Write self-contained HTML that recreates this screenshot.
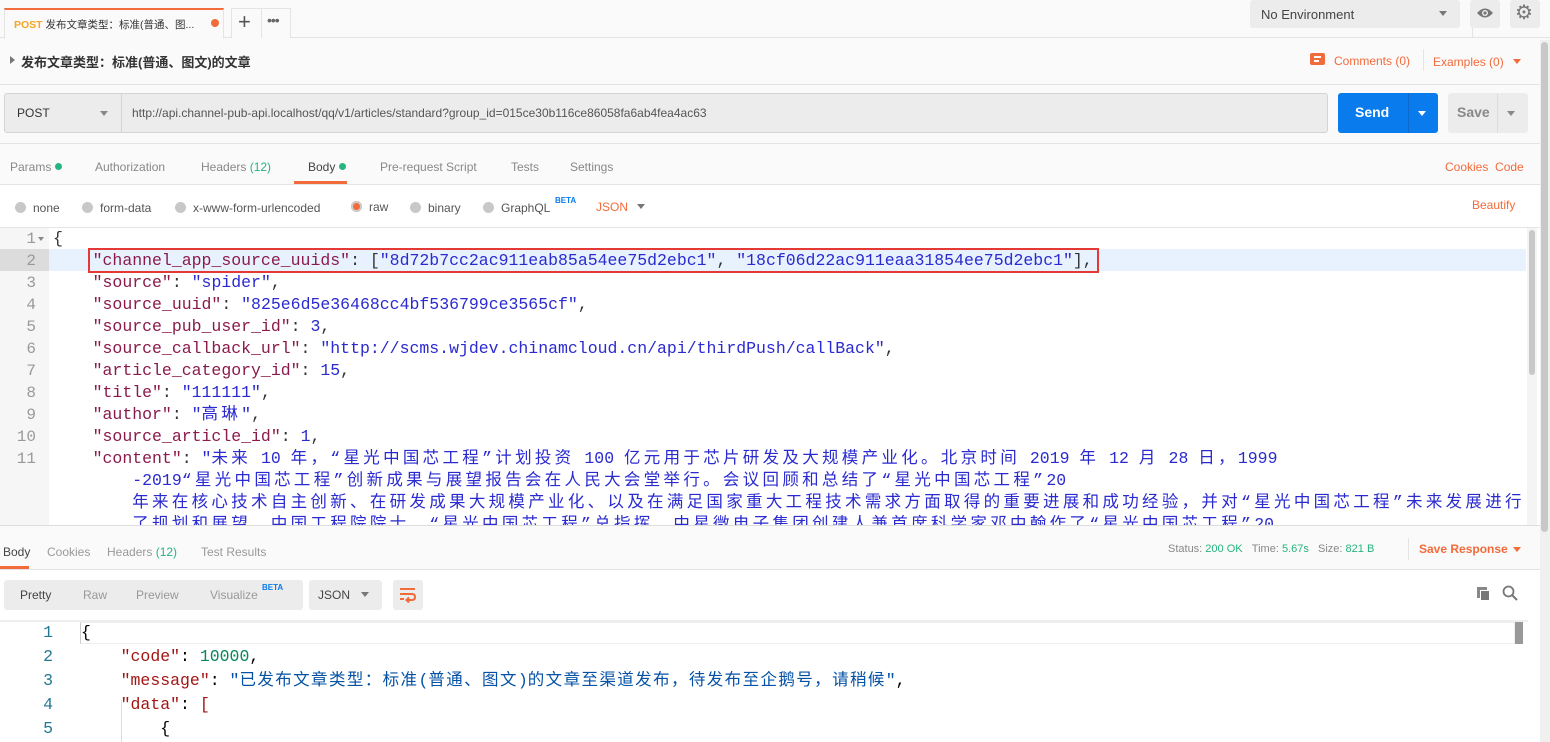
<!DOCTYPE html>
<html><head><meta charset="utf-8"><style>
*{box-sizing:border-box;margin:0;padding:0}
body{width:1550px;height:742px;overflow:hidden;background:#fafafa;font-family:"Liberation Sans","Noto Sans CJK SC",sans-serif;font-size:12px;color:#505050;position:relative}
.a{position:absolute}
.mono{font-family:"Liberation Mono","Noto Sans CJK SC",monospace;font-size:16.5px;white-space:pre}
.k{color:#8a1a4a}.s{color:#2a2ad0}.n{color:#117766}
.c{letter-spacing:3.3px}
.or{color:#f26b3a}.gr{color:#26b47f}
.dot{display:inline-block;width:7px;height:7px;border-radius:50%;background:#26b47f;margin-left:4px;vertical-align:1px}
.rad{display:inline-block;width:11px;height:11px;border-radius:50%;background:#c8c8c8;vertical-align:-1px;margin-right:7px}
.beta{position:absolute;color:#097bed;font-size:8px;font-weight:bold;top:-5px}
</style></head><body>
<!-- top bar -->
<div class="a" style="left:0;top:0;width:1550px;height:38px;background:#fafafa;border-bottom:1px solid #e4e4e4"></div>
<div class="a" style="left:4px;top:8px;width:220px;height:31px;background:#fafafa;border-top:2px solid #f26b3a;border-left:1px solid #e4e4e4;border-right:1px solid #e4e4e4"></div>
<div class="a" style="left:14px;top:17px;font-size:10.5px;white-space:nowrap"><span style="color:#f5a623;font-weight:bold">POST</span> <span style="color:#333">发布文章类型：标准(普通、图...</span></div>
<div class="a" style="left:211px;top:19px;width:8px;height:8px;border-radius:50%;background:#f26b3a"></div>
<div class="a" style="left:231px;top:8px;width:60px;height:30px;background:#fafafa;border:1px solid #e4e4e4;border-bottom:none"></div>
<div class="a" style="left:238px;top:9px;font-size:22px;color:#555">+</div>
<div class="a" style="left:261px;top:9px;height:29px;border-left:1px solid #e4e4e4"></div>
<div class="a" style="left:267px;top:12px;font-size:14px;color:#666;letter-spacing:-1px">•••</div>
<div class="a" style="left:1472px;top:0;height:38px;border-left:1px solid #e4e4e4"></div>
<div class="a" style="left:1250px;top:0;width:210px;height:28px;background:#ececec;border-radius:3px"></div>
<div class="a" style="left:1261px;top:7px;font-size:13px;color:#444">No Environment</div>
<div class="a" style="left:1439px;top:11px;border:4px solid transparent;border-top:5px solid #777"></div>
<div class="a" style="left:1470px;top:0;width:30px;height:28px;background:#ececec;border-radius:3px"></div>
<svg class="a" style="left:1476px;top:6px" width="18" height="14" viewBox="0 0 18 14"><path d="M1 7Q9 -2 17 7Q9 16 1 7Z" fill="#777"/><circle cx="9" cy="7" r="3" fill="#ececec"/><circle cx="9" cy="7" r="1.6" fill="#777"/></svg>
<div class="a" style="left:1510px;top:0;width:30px;height:28px;background:#ececec;border-radius:3px"></div>
<div class="a" style="left:1515px;top:0px;font-size:20px;color:#777">⚙</div>
<!-- title -->
<div class="a" style="left:0;top:39px;width:1540px;height:46px;background:#fafafa;border-bottom:1px solid #e4e4e4"></div>
<div class="a" style="left:10px;top:56px;border:4px solid transparent;border-left:5px solid #777"></div>
<div class="a" style="left:21px;top:52px;font-size:13px;font-weight:bold;color:#333">发布文章类型：标准(普通、图文)的文章</div>
<div class="a" style="left:1310px;top:53px;width:15px;height:12px;background:#f26b3a;border-radius:2px"></div>
<div class="a" style="left:1314px;top:56px;width:7px;height:1.5px;background:#fff"></div>
<div class="a" style="left:1314px;top:60px;width:5px;height:1.5px;background:#fff"></div>
<div class="a" style="left:1334px;top:54px;font-size:12px"><span class="or">Comments (0)</span></div>
<div class="a" style="left:1423px;top:49px;height:22px;border-left:1px solid #e4e4e4"></div>
<div class="a" style="left:1433px;top:55px;font-size:12px"><span class="or">Examples (0)</span></div>
<div class="a" style="left:1513px;top:59px;border:4px solid transparent;border-top:5px solid #f26b3a"></div>
<div class="a" style="left:1540px;top:40px;width:10px;height:702px;background:#f0f0f0"></div>
<div class="a" style="left:1541px;top:42px;width:7px;height:490px;background:#c8c8c8;border-radius:4px"></div>
<!-- url row -->
<div class="a" style="left:4px;top:93px;width:1324px;height:40px;background:#ececec;border:1px solid #d4d4d4;border-radius:3px"></div>
<div class="a" style="left:121px;top:94px;height:38px;border-left:1px solid #d4d4d4"></div>
<div class="a" style="left:17px;top:106px;font-size:12px;color:#333">POST</div>
<div class="a" style="left:100px;top:111px;border:4px solid transparent;border-top:5px solid #888"></div>
<div class="a" style="left:132px;top:106px;font-size:12px;color:#555">http://api.channel-pub-api.localhost/qq/v1/articles/standard?group_id=015ce30b116ce86058fa6ab4fea4ac63</div>
<div class="a" style="left:1338px;top:93px;width:100px;height:40px;background:#097bed;border-radius:3px"></div>
<div class="a" style="left:1408px;top:93px;height:40px;border-left:1px solid #0a6ad0"></div>
<div class="a" style="left:1355px;top:104px;font-size:14px;font-weight:bold;color:#fff">Send</div>
<div class="a" style="left:1418px;top:111px;border:4px solid transparent;border-top:5px solid #fff"></div>
<div class="a" style="left:1448px;top:93px;width:80px;height:40px;background:#ececec;border-radius:3px"></div>
<div class="a" style="left:1497px;top:93px;height:40px;border-left:1px solid #ddd"></div>
<div class="a" style="left:1457px;top:104px;font-size:14px;font-weight:bold;color:#888">Save</div>
<div class="a" style="left:1507px;top:111px;border:4px solid transparent;border-top:5px solid #888"></div>
<!-- tabs -->
<div class="a" style="left:0;top:143px;width:1540px;border-top:1px solid #e4e4e4"></div>
<div class="a" style="left:10px;top:160px;font-size:12px;color:#888;white-space:nowrap">Params<span class="dot"></span></div>
<div class="a" style="left:95px;top:160px;font-size:12px;color:#888">Authorization</div>
<div class="a" style="left:201px;top:160px;font-size:12px;color:#888">Headers <span class="gr">(12)</span></div>
<div class="a" style="left:308px;top:160px;font-size:12px;color:#444;white-space:nowrap">Body<span class="dot"></span></div>
<div class="a" style="left:294px;top:181px;width:53px;height:3px;background:#f26b3a"></div>
<div class="a" style="left:380px;top:160px;font-size:12px;color:#888">Pre-request Script</div>
<div class="a" style="left:511px;top:160px;font-size:12px;color:#888">Tests</div>
<div class="a" style="left:570px;top:160px;font-size:12px;color:#888">Settings</div>
<div class="a" style="left:1445px;top:160px;font-size:12px"><span class="or">Cookies</span> &nbsp;<span class="or">Code</span></div>
<div class="a" style="left:0;top:184px;width:1540px;height:44px;background:#fff;border-top:1px solid #e4e4e4"></div>
<div class="a" style="left:15px;top:201px;font-size:12px;color:#555;white-space:nowrap"><span class="rad"></span>none</div>
<div class="a" style="left:82px;top:201px;font-size:12px;color:#555;white-space:nowrap"><span class="rad"></span>form-data</div>
<div class="a" style="left:175px;top:201px;font-size:12px;color:#555;white-space:nowrap"><span class="rad"></span>x-www-form-urlencoded</div>
<div class="a" style="left:351px;top:200px;font-size:12px;color:#555;white-space:nowrap"><span class="rad" style="background:#f26b3a;box-shadow:inset 0 0 0 2px #ccc"></span>raw</div>
<div class="a" style="left:410px;top:201px;font-size:12px;color:#555;white-space:nowrap"><span class="rad"></span>binary</div>
<div class="a" style="left:483px;top:201px;font-size:12px;color:#555;white-space:nowrap"><span class="rad"></span>GraphQL<span class="beta" style="left:72px">BETA</span></div>
<div class="a" style="left:596px;top:200px;font-size:12px"><span class="or">JSON</span></div>
<div class="a" style="left:637px;top:204px;border:4px solid transparent;border-top:5px solid #777"></div>
<div class="a" style="left:1472px;top:198px;font-size:12px"><span class="or">Beautify</span></div>
<!-- editor -->
<div class="a" style="left:0;top:227px;width:1540px;height:298px;background:#fff;border-top:1px solid #e4e4e4;overflow:hidden">
 <div class="a" style="left:0;top:0;width:49px;height:298px;background:#f6f6f6"></div>
 <div class="a" style="left:0;top:21px;width:49px;height:22px;background:#dcdcdc"></div>
 <div class="a" style="left:49px;top:21px;width:1477px;height:22px;background:#e8f2fe"></div>
 <div class="a mono" style="left:0;top:0;width:36px;text-align:right;color:#999;line-height:22px;font-size:16px">1
2
3
4
5
6
7
8
9
10
11</div>
 <div class="a" style="left:38px;top:9px;border:3px solid transparent;border-top:4px solid #888"></div>
 <div class="a mono" style="left:53px;top:0;line-height:22px;color:#333">{
    <span class="k">"channel_app_source_uuids"</span>: [<span class="s">"8d72b7cc2ac911eab85a54ee75d2ebc1"</span>, <span class="s">"18cf06d22ac911eaa31854ee75d2ebc1"</span>],
    <span class="k">"source"</span>: <span class="s">"spider"</span>,
    <span class="k">"source_uuid"</span>: <span class="s">"825e6d5e36468cc4bf536799ce3565cf"</span>,
    <span class="k">"source_pub_user_id"</span>: <span class="s">3</span>,
    <span class="k">"source_callback_url"</span>: <span class="s">"http://scms.wjdev.chinamcloud.cn/api/thirdPush/callBack"</span>,
    <span class="k">"article_category_id"</span>: <span class="s">15</span>,
    <span class="k">"title"</span>: <span class="s">"111111"</span>,
    <span class="k">"author"</span>: <span class="s">"<span class="c">高琳</span>"</span>,
    <span class="k">"source_article_id"</span>: <span class="s">1</span>,
    <span class="k">"content"</span>: <span class="s">"<span class="c">未来</span> 10 <span class="c">年，“星光中国芯工程”计划投资</span> 100 <span class="c">亿元用于芯片研发及大规模产业化。北京时间</span> 2019 <span class="c">年</span> 12 <span class="c">月</span> 28 <span class="c">日，</span>1999</span>
<span class="s">        -2019<span class="c">“星光中国芯工程”创新成果与展望报告会在人民大会堂举行。会议回顾和总结了“星光中国芯工程”</span>20</span>
<span class="s">        <span class="c">年来在核心技术自主创新、在研发成果大规模产业化、以及在满足国家重大工程技术需求方面取得的重要进展和成功经验，并对“星光中国芯工程”未来发展进行</span></span>
<span class="s">        <span class="c">了规划和展望。中国工程院院士、“星光中国芯工程”总指挥、中星微电子集团创建人兼首席科学家邓中翰作了“星光中国芯工程”</span>20</span></div>
 <div class="a" style="left:88px;top:20px;width:1011px;height:25px;border:2px solid #e53935"></div>
 <div class="a" style="left:1527px;top:0;width:10px;height:298px;background:#f4f4f4"></div>
 <div class="a" style="left:1529px;top:2px;width:6px;height:145px;background:#c8c8c8;border-radius:3px"></div>
</div>
<!-- response -->
<div class="a" style="left:0;top:525px;width:1540px;border-top:1px solid #ddd"></div>
<div class="a" style="left:3px;top:545px;font-size:12px;color:#444">Body</div>
<div class="a" style="left:0;top:566px;width:29px;height:3px;background:#f26b3a"></div>
<div class="a" style="left:47px;top:545px;font-size:12px;color:#999">Cookies</div>
<div class="a" style="left:107px;top:545px;font-size:12px;color:#999">Headers <span class="gr">(12)</span></div>
<div class="a" style="left:201px;top:545px;font-size:12px;color:#999">Test Results</div>
<div class="a" style="left:1168px;top:543px;font-size:11px;color:#888;white-space:nowrap">Status: <span class="gr">200 OK</span> &nbsp;&nbsp;Time: <span class="gr">5.67s</span> &nbsp;&nbsp;Size: <span class="gr">821 B</span></div>
<div class="a" style="left:1408px;top:538px;height:22px;border-left:1px solid #e4e4e4"></div>
<div class="a" style="left:1419px;top:542px;font-size:12px;font-weight:bold"><span class="or">Save Response</span></div>
<div class="a" style="left:1513px;top:547px;border:4px solid transparent;border-top:5px solid #f26b3a"></div>
<div class="a" style="left:0;top:569px;width:1540px;height:173px;background:#fff;border-top:1px solid #e4e4e4"></div>
<div class="a" style="left:4px;top:580px;width:299px;height:30px;background:#ececec;border-radius:3px"></div>
<div class="a" style="left:20px;top:588px;font-size:12px;color:#444">Pretty</div>
<div class="a" style="left:83px;top:588px;font-size:12px;color:#999">Raw</div>
<div class="a" style="left:136px;top:588px;font-size:12px;color:#999">Preview</div>
<div class="a" style="left:210px;top:588px;font-size:12px;color:#999;white-space:nowrap">Visualize<span class="beta" style="left:52px">BETA</span></div>
<div class="a" style="left:309px;top:580px;width:73px;height:30px;background:#ececec;border-radius:3px"></div>
<div class="a" style="left:318px;top:588px;font-size:12px;color:#444">JSON</div>
<div class="a" style="left:361px;top:592px;border:4px solid transparent;border-top:5px solid #777"></div>
<div class="a" style="left:393px;top:580px;width:30px;height:30px;background:#ececec;border-radius:3px"></div>
<svg class="a" style="left:399px;top:587px" width="18" height="16" viewBox="0 0 18 16"><path d="M1 2H16M1 7H13Q16 7 16 10Q16 13 13 13H8M10 10.5L7.5 13L10 15.5M1 12H5" stroke="#f26b3a" stroke-width="2" fill="none"/></svg>
<div class="a" style="left:1477px;top:587px;width:10px;height:11px;background:#888"></div>
<div class="a" style="left:1480px;top:590px;width:10px;height:11px;background:#777;border:1px solid #fff"></div>
<svg class="a" style="left:1502px;top:585px" width="16" height="16"><circle cx="6.5" cy="6.5" r="5" stroke="#777" stroke-width="1.8" fill="none"/><path d="M10 10L15 15" stroke="#777" stroke-width="2"/></svg>
<div class="a" style="left:0;top:620px;width:1528px;border-top:2px solid #eee"></div>
<div class="a" style="left:80px;top:622px;width:1435px;height:22px;border:1px solid #eee;border-left:1px solid #ccc"></div>
<div class="a" style="left:1515px;top:622px;width:8px;height:22px;background:#999"></div>
<div class="a mono" style="left:0;top:621px;width:53px;text-align:right;line-height:24px;color:#237893">1
2
3
4
5</div>
<div class="a mono" style="left:81px;top:621px;line-height:24px;color:#000">{
    <span style="color:#a31515">"code"</span>: <span style="color:#098658">10000</span>,
    <span style="color:#a31515">"message"</span>: <span style="color:#0451a5">"<span style="letter-spacing:1.4px">已发布文章类型：标准</span>(<span style="letter-spacing:1.4px">普通、图文</span>)<span style="letter-spacing:1.4px">的文章至渠道发布，待发布至企鹅号，请稍候</span>"</span>,
    <span style="color:#a31515">"data"</span>: <span style="color:#a31515">[</span>
        {</div>
<div class="a" style="left:121px;top:700px;height:42px;border-left:1px solid #ddd"></div>
</body></html>
